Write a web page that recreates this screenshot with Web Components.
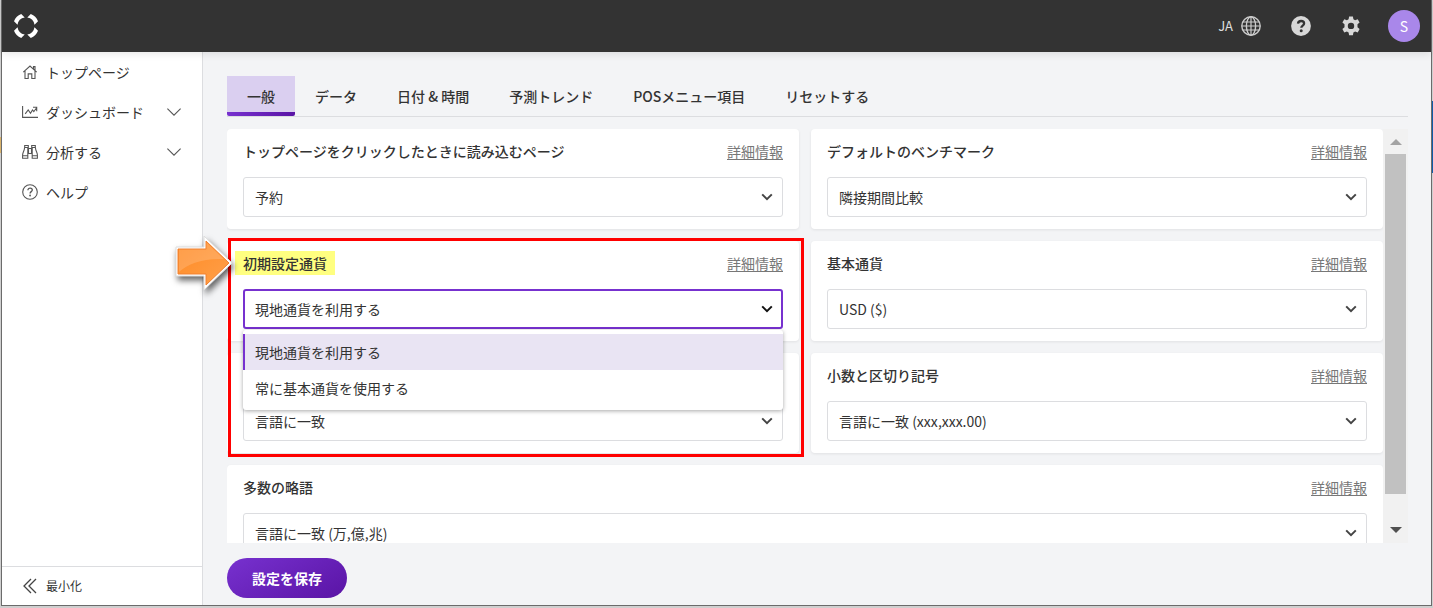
<!DOCTYPE html>
<html lang="ja">
<head>
<meta charset="utf-8">
<title>設定</title>
<style>
  :root {
    --text: #333;
    --muted: #777;
    --line: #dcdde0;
    --page: #f3f4f6;
    --purple: #7731cf;
    --purple-dark: #5a14a5;
  }

  html, body {
    height: 100%;
    margin: 0;
  }

  body {
    display: flex;
    box-sizing: border-box;
    padding: 0 1px 2px;
    color: var(--text);
    font: 14px/20px "Noto Sans CJK JP", "Noto Sans", sans-serif;
    background:
      linear-gradient(#0f5da8, #0f5da8) right 101px / 1px 72px no-repeat,
      linear-gradient(#d9b36c, #d9b36c) left 137px / 1px 16px no-repeat,
      #cfcfcf;
  }
</style>
</head>
<body>
<app-window>
  <app-header slot="header" locale="JA" initial="S"></app-header>

  <side-nav slot="nav">
    <nav-item icon="home">トップページ</nav-item>
    <nav-item icon="chart" expandable>ダッシュボード</nav-item>
    <nav-item icon="binoculars" expandable>分析する</nav-item>
    <nav-item icon="help">ヘルプ</nav-item>
    <span slot="footer">最小化</span>
  </side-nav>

  <tab-bar>
    <tab-item active>一般</tab-item>
    <tab-item>データ</tab-item>
    <tab-item>日付 &amp; 時間</tab-item>
    <tab-item>予測トレンド</tab-item>
    <tab-item>POSメニュー項目</tab-item>
    <tab-item>リセットする</tab-item>
  </tab-bar>

  <settings-panel>
    <setting-card label="トップページをクリックしたときに読み込むページ" value="予約"></setting-card>
    <setting-card label="デフォルトのベンチマーク" value="隣接期間比較"></setting-card>
    <setting-card label="初期設定通貨" value="現地通貨を利用する" options="現地通貨を利用する|常に基本通貨を使用する" marked open></setting-card>
    <setting-card label="基本通貨" value="USD ($)"></setting-card>
    <setting-card label="言語" value="言語に一致"></setting-card>
    <setting-card label="小数と区切り記号" value="言語に一致 (xxx,xxx.00)"></setting-card>
    <setting-card label="多数の略語" value="言語に一致 (万,億,兆)" wide></setting-card>
    <call-out slot="overlay"></call-out>
  </settings-panel>

  <save-button slot="actions">設定を保存</save-button>
</app-window>

<script>
const ICONS = {
  home: `<svg width="16" height="16" viewBox="0 0 16 16" fill="none" stroke="#555" stroke-width="1.1">
    <path d="M1.3 8.2 8 2l6.700 6.200M3 7v7.500h3.200v-4.600h3.600v4.600H13V7M11.500 4.800V2.600H13v3.600"/></svg>`,
  chart: `<svg width="16" height="16" viewBox="0 0 16 16" fill="none" stroke="#555" stroke-width="1.1">
    <path d="M.6 2v11.400H16M3.200 9.800l3-3.800 2.300 3.300 2-3.300 1.300 1.700 2.800-3.900M11 3.300h3.700v3.900"/></svg>`,
  binoculars: `<svg width="16" height="16" viewBox="0 0 16 16" fill="none" stroke="#555" stroke-width="1.100">
    <path d="M2.700 1.500h3.600v2H2.700zM9.700 1.500h3.600v2H9.700zM2.600 3.500C2.400 7 .6 8.500.6 11v3.300h5.200V3.500M13.400 3.500c.2 3.500 2 5 2 7.500v3.300h-5.200V3.500M6.500 4.500h3M5.800 9.500h4.400M.6 11.800h5.200M10.200 11.800h5.200M6.500 4v5.500M9.500 4v5.500"/></svg>`,
  help: `<svg width="16" height="16" viewBox="0 0 16 16" fill="none" stroke="#555" stroke-width="1.100">
    <circle cx="8" cy="8" r="7.300"/><path d="M5.900 6.300c0-1.400 1-2.100 2.200-2.100s2.200.8 2.200 1.900c0 1.600-2.200 1.500-2.200 3.300" stroke-width="1.300"/><circle cx="8.100" cy="11.500" r=".4"/></svg>`,
  chevron: `<svg width="14" height="8" viewBox="0 0 14 8" fill="none" stroke="#555" stroke-width="1.100"><path d="m.4.600 6.600 6.600L13.600.6"/></svg>`,
  collapse: `<svg width="16" height="16" viewBox="0 0 16 16" fill="none" stroke="#444" stroke-width="1.300"><path d="M9 1 2 8l7 7M14 1 7 8l7 7"/></svg>`,
  logo: `<svg width="24" height="24" viewBox="0 0 24 24" fill="#fff">
    <defs><path id="seg" d="M13.300 3.500 16.800 0Q22 2 24 7.200l-3.500 3.500a8.700 8.700 0 0 0-7.200-7.200z"/></defs>
    <use href="#seg"/><use href="#seg" transform="rotate(90 12 12)"/><use href="#seg" transform="rotate(180 12 12)"/><use href="#seg" transform="rotate(270 12 12)"/></svg>`,
  globe: `<svg width="20" height="20" viewBox="0 0 20 20" fill="none" stroke="#ccc" stroke-width="1.400">
    <circle cx="10" cy="10" r="9.200"/><ellipse cx="10" cy="10" rx="4.600" ry="9.200"/><path d="M10 1v18M2 6h16M.8 10h18.400M2 14h16" stroke-width="1.200"/></svg>`,
  question: `<svg width="20" height="20" viewBox="0 0 20 20"><circle cx="10" cy="10" r="9.900" fill="#d8d8d8"/>
    <path d="M7 7.700C7.200 5.800 8.500 5 10.100 5c1.700 0 3 1 3 2.500 0 2.200-2.800 2-2.800 4.300" fill="none" stroke="#333" stroke-width="2.300"/><circle cx="10.200" cy="14.700" r="1.500" fill="#333"/></svg>`,
  gear: `<svg width="20" height="20" viewBox="0 0 20 20" fill="#d8d8d8" fill-rule="evenodd">
    <path d="M8.100.5h3.800l.5 2.700 1.700 1 2.600-1 1.900 3.300-2.100 1.800v2.900l2.100 1.900-1.900 3.300-2.600-.9-1.700 1-.5 2.800H8.100l-.5-2.800-1.700-1-2.600.9-1.900-3.300 2.100-1.900V8.300L1.400 6.500l1.900-3.300 2.600 1 1.700-1zM10 6.700a3.200 3.200 0 1 0 0 6.400 3.200 3.200 0 0 0 0-6.400z"/></svg>`,
  caret: `<svg width="12" height="8" viewBox="0 0 12 8" fill="none" stroke="currentColor" stroke-width="2"><path d="m1.200 1.400 4.800 4.800 4.800-4.800"/></svg>`,
};

class AppWindow extends HTMLElement {
  constructor() {
    super();
    this.attachShadow({ mode: 'open' }).innerHTML = `
      <style>
        :host {
          flex: 1;
          min-width: 0;
          display: flex;
          flex-direction: column;
          border: solid #6b6b6b;
          border-width: 0 1px 1px;
          background: var(--page);
        }
        .body { flex: 1; min-height: 0; display: flex; }
        main {
          flex: 1;
          min-width: 0;
          box-sizing: border-box;
          display: flex;
          flex-direction: column;
          padding: 24px 23px 7px 24px;
        }
      </style>
      <slot name="header"></slot>
      <div class="body">
        <slot name="nav"></slot>
        <main><slot></slot><slot name="actions"></slot></main>
      </div>
    `;
  }
}

class AppHeader extends HTMLElement {
  constructor() {
    super();
    this.attachShadow({ mode: 'open' }).innerHTML = `
      <style>
        :host {
          display: block;
          position: relative;
          z-index: 2;
          background: #333;
          box-shadow: 0 2px 8px rgba(0, 0, 0, 0.1);
        }
        header {
          display: flex;
          align-items: center;
          justify-content: space-between;
          height: 52px;
          padding: 0 11px 0 12px;
        }
        a, button { display: flex; align-items: center; }
        button {
          padding: 0;
          border: 0;
          background: none;
          color: #ddd;
          font: inherit;
          cursor: pointer;
        }
        .tools { display: flex; align-items: center; gap: 30px; }
        .locale { gap: 8px; font-size: 13px; }
        .user {
          justify-content: center;
          width: 32px;
          height: 32px;
          margin-left: -3px;
          border-radius: 50%;
          background: #a987ea;
          color: #fff;
        }
      </style>
      <header>
        <a href="#home" aria-label="ホーム">${ICONS.logo}</a>
        <div class="tools">
          <button class="locale">${this.getAttribute('locale')}${ICONS.globe}</button>
          <button aria-label="ヘルプ">${ICONS.question}</button>
          <button aria-label="設定">${ICONS.gear}</button>
          <button class="user">${this.getAttribute('initial')}</button>
        </div>
      </header>
    `;
  }
}

class SideNav extends HTMLElement {
  constructor() {
    super();
    this.attachShadow({ mode: 'open' }).innerHTML = `
      <style>
        :host {
          flex: none;
          display: flex;
          flex-direction: column;
          width: 200px;
          background: #fff;
          border-right: 1px solid var(--line);
        }
        nav { flex: 1; }
        button {
          display: flex;
          align-items: center;
          gap: 8px;
          height: 39px;
          padding: 0 20px;
          border: 0;
          border-top: 1px solid var(--line);
          background: none;
          color: inherit;
          font: inherit;
          font-size: 12px;
          cursor: pointer;
        }
      </style>
      <nav><slot></slot></nav>
      <button>${ICONS.collapse}<slot name="footer"></slot></button>
    `;
  }
}

class NavItem extends HTMLElement {
  constructor() {
    super();
    this.attachShadow({ mode: 'open' }).innerHTML = `
      <style>
        :host { display: block; }
        a {
          display: flex;
          align-items: center;
          gap: 8px;
          height: 40px;
          padding: 0 21px 0 20px;
          color: inherit;
          text-decoration: none;
        }
        span { flex: 1; }
      </style>
      <a href="#${this.getAttribute('icon')}">
        ${ICONS[this.getAttribute('icon')]}
        <span><slot></slot></span>
        ${this.hasAttribute('expandable') ? ICONS.chevron : ''}
      </a>
    `;
  }
}

class TabBar extends HTMLElement {
  constructor() {
    super();
    this.attachShadow({ mode: 'open' }).innerHTML = `
      <style>
        :host { display: flex; border-bottom: 1px solid var(--line); }
      </style>
      <slot></slot>
    `;
  }
}

class TabItem extends HTMLElement {
  constructor() {
    super();
    this.attachShadow({ mode: 'open' }).innerHTML = `
      <style>
        :host { display: block; }
        button {
          display: block;
          height: 40px;
          padding: 0 20px;
          border: 0;
          background: none;
          color: inherit;
          font: inherit;
          font-weight: 500;
          cursor: pointer;
        }
        :host([active]) button {
          border-radius: 0 0 2px 2px;
          background:
            linear-gradient(90deg, var(--purple), var(--purple-dark)) bottom / 100% 4px no-repeat,
            #dacff0;
        }
      </style>
      <button><slot></slot></button>
    `;
  }
}

class SettingsPanel extends HTMLElement {
  constructor() {
    super();
    this.attachShadow({ mode: 'open' }).innerHTML = `
      <style>
        :host {
          flex: 1;
          min-height: 0;
          display: flex;
          position: relative;
          margin: 12px 0 15px;
        }
        .cards {
          flex: 1;
          overflow: hidden;
          display: grid;
          grid-template-columns: 1fr 1fr;
          grid-auto-rows: 100px;
          gap: 12px;
        }
        .track {
          flex: none;
          box-sizing: border-box;
          width: 25px;
          display: flex;
          flex-direction: column;
          align-items: center;
          padding: 10px 2px;
          background: #f1f1f1;
        }
        .thumb {
          flex: 1;
          align-self: stretch;
          margin: 9px 0 33px;
          background: #c1c1c1;
        }
      </style>
      <div class="cards"><slot></slot></div>
      <div class="track">
        <svg width="12" height="6" fill="#a3a3a3"><path d="M0 6 6 0l6 6z"/></svg>
        <div class="thumb"></div>
        <svg width="12" height="6" fill="#505050"><path d="m0 0 6 6 6-6z"/></svg>
      </div>
      <slot name="overlay"></slot>
    `;
  }
}

class SettingCard extends HTMLElement {
  constructor() {
    super();
    const label = this.getAttribute('label');
    const value = this.getAttribute('value');
    const options = (this.getAttribute('options') || value).split('|');

    this.attachShadow({ mode: 'open' }).innerHTML = `
      <style>
        :host {
          display: flex;
          flex-direction: column;
          gap: 16px;
          box-sizing: border-box;
          padding: 12px 16px;
          border-radius: 4px;
          background: #fff;
          box-shadow: 0 1px 3px rgba(0, 0, 0, 0.08);
        }
        :host([wide]) { grid-column: 1 / -1; }
        :host([open]) { position: relative; z-index: 1; }
        .head { display: flex; justify-content: space-between; height: 20px; }
        label { font-weight: 500; }
        :host([marked]) label {
          height: 20px;
          margin: -2px -8px;
          padding: 2px 8px;
          background: #ffff80;
        }
        .head a { color: var(--muted); text-underline-offset: 2px; }
        .field { position: relative; display: grid; align-items: center; }
        .field > * { grid-area: 1 / 1; }
        .field > svg { justify-self: end; margin-right: 10px; color: #444; pointer-events: none; }
        select {
          appearance: none;
          box-sizing: border-box;
          width: 100%;
          height: 40px;
          padding: 0 32px 0 11px;
          border: 1px solid var(--line);
          border-radius: 3px;
          background: #fff;
          color: inherit;
          font: inherit;
        }
        :host([open]) select { padding-left: 10px; border: 2px solid var(--purple); }
        :host([open]) .field > svg { color: #111; }
        .menu {
          position: absolute;
          top: 41px;
          left: 0;
          right: 0;
          padding: 4px 0;
          border-radius: 3px;
          background: #fff;
          box-shadow: 0 1px 4px rgba(0, 0, 0, 0.35);
        }
        .menu button {
          display: block;
          width: 100%;
          height: 36px;
          padding: 0 10px;
          border: 0;
          border-left: 2px solid transparent;
          background: none;
          color: inherit;
          font: inherit;
          text-align: left;
        }
        .menu button[aria-selected="true"] { border-color: var(--purple); background: #e9e4f3; }
      </style>
      <div class="head">
        <label for="field">${label}</label>
        <a href="#details">詳細情報</a>
      </div>
      <div class="field">
        <select id="field">${options.map((o) => `<option>${o}</option>`).join('')}</select>
        ${ICONS.caret}
        ${this.hasAttribute('open') ? `<div class="menu" role="listbox">${options
          .map((o) => `<button role="option" aria-selected="${o === value}">${o}</button>`)
          .join('')}</div>` : ''}
      </div>
    `;

    // Picking from the menu writes back to the select and closes the list
    const select = this.shadowRoot.querySelector('select');
    const menu = this.shadowRoot.querySelector('.menu');
    if (menu) {
      menu.addEventListener('click', (e) => {
        if (!e.target.matches('button')) return;
        select.value = e.target.textContent;
        menu.remove();
        this.removeAttribute('open');
      });
    }
  }
}

// Red frame round the currency setting, with an arrow that points at its label
class CallOut extends HTMLElement {
  constructor() {
    super();
    this.attachShadow({ mode: 'open' }).innerHTML = `
      <style>
        :host {
          position: absolute;
          z-index: 3;
          top: 109px;
          left: 1px;
          box-sizing: border-box;
          width: calc((100% - 37px) / 2 + 4px);
          height: 219px;
          border: 3px solid #f00;
          pointer-events: none;
        }
        svg {
          position: absolute;
          top: -8px;
          left: -56px;
          overflow: visible;
          filter: drop-shadow(2px 4px 3px rgba(0, 0, 0, 0.6));
        }
      </style>
      <svg width="60" height="60" viewBox="0 0 60 60">
        <defs>
          <linearGradient id="orange" x1="0" y1="0" x2="1" y2="1">
            <stop offset="0" stop-color="#ff8a24"/>
            <stop offset="1" stop-color="#ffa04a"/>
          </linearGradient>
        </defs>
        <path d="M1 14h28V3l28 27-28 27V43H1z" fill="#fff" stroke="#ddd" stroke-width="1"/>
        <path d="M3 16h28V8l23 22-23 22V41H3z" fill="url(#orange)" stroke="#f08030" stroke-width="1"/>
        <path d="M4 16.500h27.500V9.500l17 16.500C28 25 12 31 4 39z" fill="#fff" opacity=".16"/>
      </svg>
    `;
  }
}

class SaveButton extends HTMLElement {
  constructor() {
    super();
    this.attachShadow({ mode: 'open' }).innerHTML = `
      <style>
        :host { display: block; }
        button {
          display: block;
          height: 40px;
          padding: 0 25px;
          border: 0;
          border-radius: 20px;
          background: linear-gradient(150deg, var(--purple), var(--purple-dark));
          color: #fff;
          font: inherit;
          font-weight: 700;
          cursor: pointer;
        }
      </style>
      <button><slot></slot></button>
    `;
  }
}

customElements.define('app-window', AppWindow);
customElements.define('app-header', AppHeader);
customElements.define('side-nav', SideNav);
customElements.define('nav-item', NavItem);
customElements.define('tab-bar', TabBar);
customElements.define('tab-item', TabItem);
customElements.define('settings-panel', SettingsPanel);
customElements.define('setting-card', SettingCard);
customElements.define('call-out', CallOut);
customElements.define('save-button', SaveButton);
</script>
</body>
</html>
